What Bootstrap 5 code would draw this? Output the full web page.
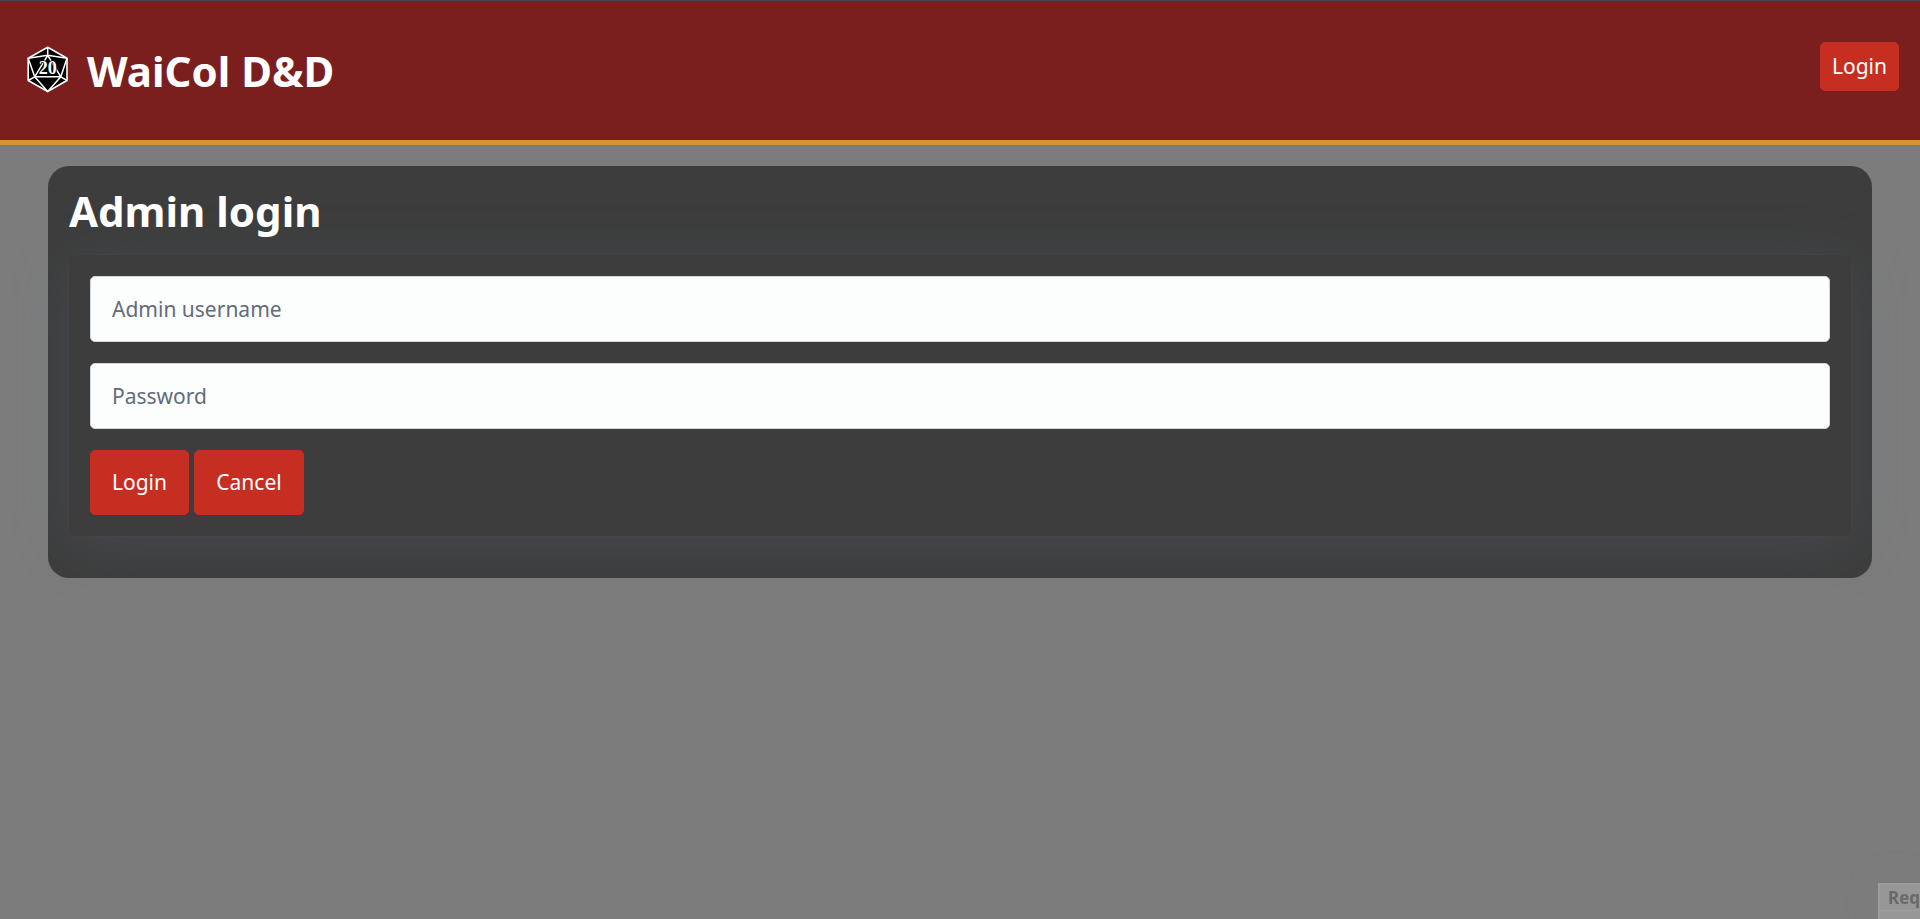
<!DOCTYPE html>
<html lang="en">
<head>
<meta charset="utf-8">
<meta name="viewport" content="width=device-width, initial-scale=1">
<title>WaiCol D&amp;D</title>
<link href="https://cdn.jsdelivr.net/npm/bootstrap@5.3.0/dist/css/bootstrap.min.css" rel="stylesheet">
<style>
html { font-size: 21px; }
body { font-family: "Noto Sans", sans-serif; font-size: 21px; line-height: 31px; background: #7c7c7c; color: #fff; }
.site-header { background: #7a1f1e; border-top: 1px solid #44415a; border-bottom: 5px solid #d59237; padding: 41px 21px 44px; }
.site-title, .panel-title { font-size: 42px; line-height: 50px; font-weight: 700; color: #fff; margin: 0; }
.brand-link { gap: 17px; padding: 4px 0 0 5px; }
.brand-link svg { width: 44px; height: 50px; flex: none; }
.btn-red { --bs-btn-color: #fff; --bs-btn-bg: #c62e22; --bs-btn-border-color: #c62e22; --bs-btn-hover-color: #fff; --bs-btn-hover-bg: #a92319; --bs-btn-hover-border-color: #a92319; --bs-btn-font-size: 21px; --bs-btn-line-height: 31px; --bs-btn-border-radius: 5px; --bs-btn-padding-x: 21px; --bs-btn-padding-y: 16px; }
.btn-nav { --bs-btn-padding-x: 11px; --bs-btn-padding-y: 8px; }
.login-panel { background: #3d3d3d; border-radius: 21px; margin: 21px 48px; padding: 20px 21px 42px; }
.panel-title { margin-bottom: 19px; }
.login-form { background: #3d3d3d; border-radius: 5px; padding: 21px; gap: 21px; box-shadow: 0 10px 60px rgba(95, 112, 135, .24), 0 0 0 1px rgba(105, 112, 135, .06); }
.login-form .form-control { background: #fbfefd; border: 1px solid #cfd5e2; border-radius: 5px; padding: 16px 21px; height: 66px; font-size: 21px; line-height: 32px; }
.login-form .form-control::placeholder { color: #646b79; opacity: 1; }
/* request monitor peeking in from the corner */
.request-box { right: 0; bottom: 0; width: 42px; height: 36px; overflow: hidden; background: #979797; border: 2px solid #9d9d9d; border-width: 2px 0 0 2px; box-shadow: 0 0 32px rgba(125, 132, 140, .3); }
.request-box th, .request-box td { color: #68696c; font-size: 17px; line-height: 25px; padding: 0 8px; }
.request-box td { border-top: 1px solid #9f9f9f; padding: 3px 14px; }
</style>
</head>
<body>
<header class="site-header d-flex justify-content-between align-items-start">
  <a class="brand-link d-flex align-items-center text-decoration-none" href="#">
    <svg viewBox="0 0 44 50" aria-hidden="true">
      <path d="M21.7 1.2 41 12.2V34.5L21.7 45.5 2.2 34.5V12.2Z" fill="#000" stroke="#fff" stroke-width="1.6" stroke-linejoin="round"/>
      <path d="M21.7 1.2V9.3M2.2 12.2 21.7 9.3 41 12.2M2.2 12.2 8.7 30.8 2.2 34.5M41 12.2 34.8 30.8 41 34.5M21.7 9.3 8.7 30.8H34.8ZM8.7 30.8 21.7 45.5 34.8 30.8" fill="none" stroke="#fff" stroke-width="1.5" stroke-linejoin="round"/>
      <text x="21.7" y="27.9" text-anchor="middle" font-family="Liberation Serif, serif" font-weight="700" font-size="18" fill="#fff" stroke="#000" stroke-width="1.4" paint-order="stroke">20</text>
    </svg>
    <h1 class="site-title">WaiCol D&amp;D</h1>
  </a>
  <button type="button" class="btn btn-red btn-nav">Login</button>
</header>
<main>
  <section class="login-panel">
    <h2 class="panel-title">Admin login</h2>
    <form class="login-form d-flex flex-column">
      <input class="form-control" type="text" placeholder="Admin username" aria-label="Admin username">
      <input class="form-control" type="password" placeholder="Password" aria-label="Password">
      <div class="d-flex gap-1">
        <button type="button" class="btn btn-red">Login</button>
        <button type="button" class="btn btn-red">Cancel</button>
      </div>
    </form>
  </section>
</main>
<div class="request-box position-fixed">
  <table>
    <thead><tr><th scope="col">Req</th></tr></thead>
    <tbody><tr><td>URL</td></tr></tbody>
  </table>
</div>
<script src="https://cdn.jsdelivr.net/npm/bootstrap@5.3.0/dist/js/bootstrap.bundle.min.js"></script>
</body>
</html>
